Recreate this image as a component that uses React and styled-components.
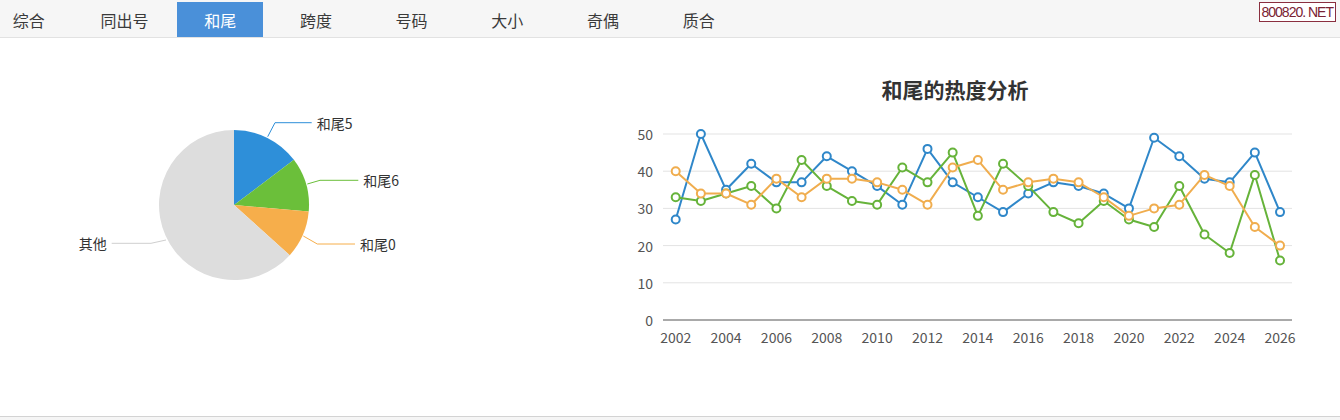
import React from 'react';
import styled, { createGlobalStyle } from 'styled-components';

const tabs = ['综合', '同出号', '和尾', '跨度', '号码', '大小', '奇偶', '质合'];

const years = Array.from({ length: 25 }, (_, i) => 2002 + i);

const series = [
    {
        name: '和尾5',
        color: '#2f87c9',
        data: [27, 50, 35, 42, 37, 37, 44, 40, 36, 31, 46, 37, 33, 29, 34, 37, 36, 34, 30, 49, 44, 38, 37, 45, 29]
    },
    {
        name: '和尾6',
        color: '#66b33a',
        data: [33, 32, 34, 36, 30, 43, 36, 32, 31, 41, 37, 45, 28, 42, 36, 29, 26, 32, 27, 25, 36, 23, 18, 39, 16]
    },
    {
        name: '和尾0',
        color: '#f0ad4e',
        data: [40, 34, 34, 31, 38, 33, 38, 38, 37, 35, 31, 41, 43, 35, 37, 38, 37, 33, 28, 30, 31, 39, 36, 25, 20]
    }
];

const pieSlices = [
    { name: '和尾5', color: '#2e8fd9', from: 0, to: 53, line: [[267.7, 98.7], [275, 84.7], [311.7, 84.7]], anchor: 'start' },
    { name: '和尾6', color: '#6bbf3a', from: 53, to: 95, line: [[307.3, 146], [320, 142.3], [358.3, 142.3]], anchor: 'start' },
    { name: '和尾0', color: '#f6ae4b', from: 95, to: 132, line: [[303.3, 198], [317.3, 206], [355, 206]], anchor: 'start' },
    { name: '其他', color: '#dddddd', lineColor: '#cfcfcf', from: 132, to: 360, line: [[166, 202], [151, 205.3], [111.7, 205.3]], anchor: 'end' }
];

const PIE = { cx: 234, cy: 167, r: 75 };

// chart geometry inside the line chart svg
const CH = { left: 63, right: 692, x0: 75.7, step: 25.18, top: 31, bottom: 217 };
const yOf = v => CH.bottom - (v / 50) * (CH.bottom - CH.top);
const xOf = i => CH.x0 + i * CH.step;

const polar = a => {
    const rad = (a * Math.PI) / 180;
    return [PIE.cx + PIE.r * Math.sin(rad), PIE.cy - PIE.r * Math.cos(rad)];
};

const slicePath = (from, to) => {
    const [x1, y1] = polar(from);
    const [x2, y2] = polar(to);
    const large = to - from > 180 ? 1 : 0;
    return `M${PIE.cx},${PIE.cy} L${x1},${y1} A${PIE.r},${PIE.r} 0 ${large} 1 ${x2},${y2} Z`;
};

const PieChart = () => (
    <PieSvg width="600" height="378">
        {pieSlices.map(s =>
            <path key={s.name} d={slicePath(s.from, s.to)} fill={s.color}/>
        )}
        {pieSlices.map(s => {
            const last = s.line[2];
            return (
                <g key={s.name + '-label'}>
                    <polyline
                        points={s.line.map(p => p.join(',')).join(' ')}
                        fill="none"
                        stroke={s.lineColor || s.color}
                        strokeWidth="1"
                    />
                    <PieLabel
                        x={s.anchor === 'start' ? last[0] + 5 : last[0] - 5}
                        y={last[1]}
                        textAnchor={s.anchor}
                        dominantBaseline="central"
                    >
                        {s.name}
                    </PieLabel>
                </g>
            );
        })}
    </PieSvg>
);

const LineChart = () => (
    <ChartSvg width="710" height="313">
        {[0, 10, 20, 30, 40, 50].map(v =>
            <g key={v}>
                {v > 0 &&
                    <line x1={CH.left} x2={CH.right} y1={yOf(v)} y2={yOf(v)} stroke="#e3e3e3" strokeWidth="1"/>
                }
                <AxisText x={53} y={yOf(v)} textAnchor="end" dominantBaseline="central">{v}</AxisText>
            </g>
        )}
        <line x1={CH.left} x2={CH.right} y1={CH.bottom} y2={CH.bottom} stroke="#555" strokeWidth="1"/>
        {years.map((y, i) => i % 2 === 0 &&
            <AxisText key={y} x={xOf(i)} y={234} textAnchor="middle" dominantBaseline="central">{y}</AxisText>
        )}
        {series.map(s =>
            <g key={s.name}>
                <polyline
                    points={s.data.map((v, i) => `${xOf(i)},${yOf(v)}`).join(' ')}
                    fill="none"
                    stroke={s.color}
                    strokeWidth="2"
                    strokeLinejoin="round"
                />
                {s.data.map((v, i) =>
                    <circle key={i} cx={xOf(i)} cy={yOf(v)} r="4" fill="#fff" stroke={s.color} strokeWidth="2"/>
                )}
            </g>
        )}
    </ChartSvg>
);

const App = () => {
    return (
        <Page>
            <GlobalStyle/>
            <TabBar>
                <TabList>
                    {tabs.map(t =>
                        <Tab key={t} $active={t === '和尾'}>{t}</Tab>
                    )}
                </TabList>
                <Watermark>800820. NET</Watermark>
            </TabBar>
            <Content>
                <PiePanel>
                    <PieChart/>
                </PiePanel>
                <ChartPanel>
                    <ChartTitle>和尾的热度分析</ChartTitle>
                    <LineChart/>
                </ChartPanel>
            </Content>
            <Footer/>
        </Page>
    );
};

export default App;


const GlobalStyle = createGlobalStyle`
    body {
        margin: 0;
        background: #fff;
        font-family: "Noto Sans CJK SC", "Noto Sans", sans-serif;
    }
`;

const Page = styled.div`
    width: 1340px;
    height: 420px;
    display: flex;
    flex-direction: column;
    overflow: hidden;
`;

const TabBar = styled.div`
    position: relative;
    height: 37px;
    flex: none;
    background: #f6f6f6;
    border-bottom: 1px solid #e2e2e2;
`;

const TabList = styled.ul`
    display: flex;
    gap: 10px;
    margin: 0 0 0 -14px;
    padding: 2px 0 0;
    list-style: none;
`;

const Tab = styled.li`
    width: 85.7px;
    height: 35px;
    display: flex;
    align-items: center;
    justify-content: center;
    font-size: 16px;
    color: ${props => props.$active ? '#fff' : '#3a3a3a'};
    background: ${props => props.$active ? '#4a90d9' : 'transparent'};
`;

const Watermark = styled.div`
    position: absolute;
    top: 2px;
    right: 4px;
    padding: 0 2px;
    height: 18px;
    line-height: 18px;
    border: 1px solid #8a2f3f;
    background: #fff;
    color: #7a2233;
    font-family: "Liberation Sans", Arial, sans-serif;
    font-size: 14px;
    letter-spacing: -1px;
`;

const Content = styled.div`
    flex: 1;
    display: flex;
    background: #fff;
`;

const PiePanel = styled.div`
    width: 600px;
`;

const PieSvg = styled.svg`
    display: block;
`;

const PieLabel = styled.text`
    font-size: 14px;
    fill: #333;
`;

const ChartPanel = styled.div`
    width: 710px;
    display: flex;
    flex-direction: column;
`;

const ChartTitle = styled.div`
    padding-top: 39px;
    height: 24px;
    line-height: 24px;
    text-align: center;
    font-size: 21px;
    font-weight: bold;
    color: #333;
`;

const ChartSvg = styled.svg`
    display: block;
    margin-top: 2px;
`;

const AxisText = styled.text`
    font-size: 14px;
    fill: #555;
`;

const Footer = styled.div`
    height: 3px;
    flex: none;
    background: #f5f5f5;
    border-top: 1px solid #d3d3d3;
`;
